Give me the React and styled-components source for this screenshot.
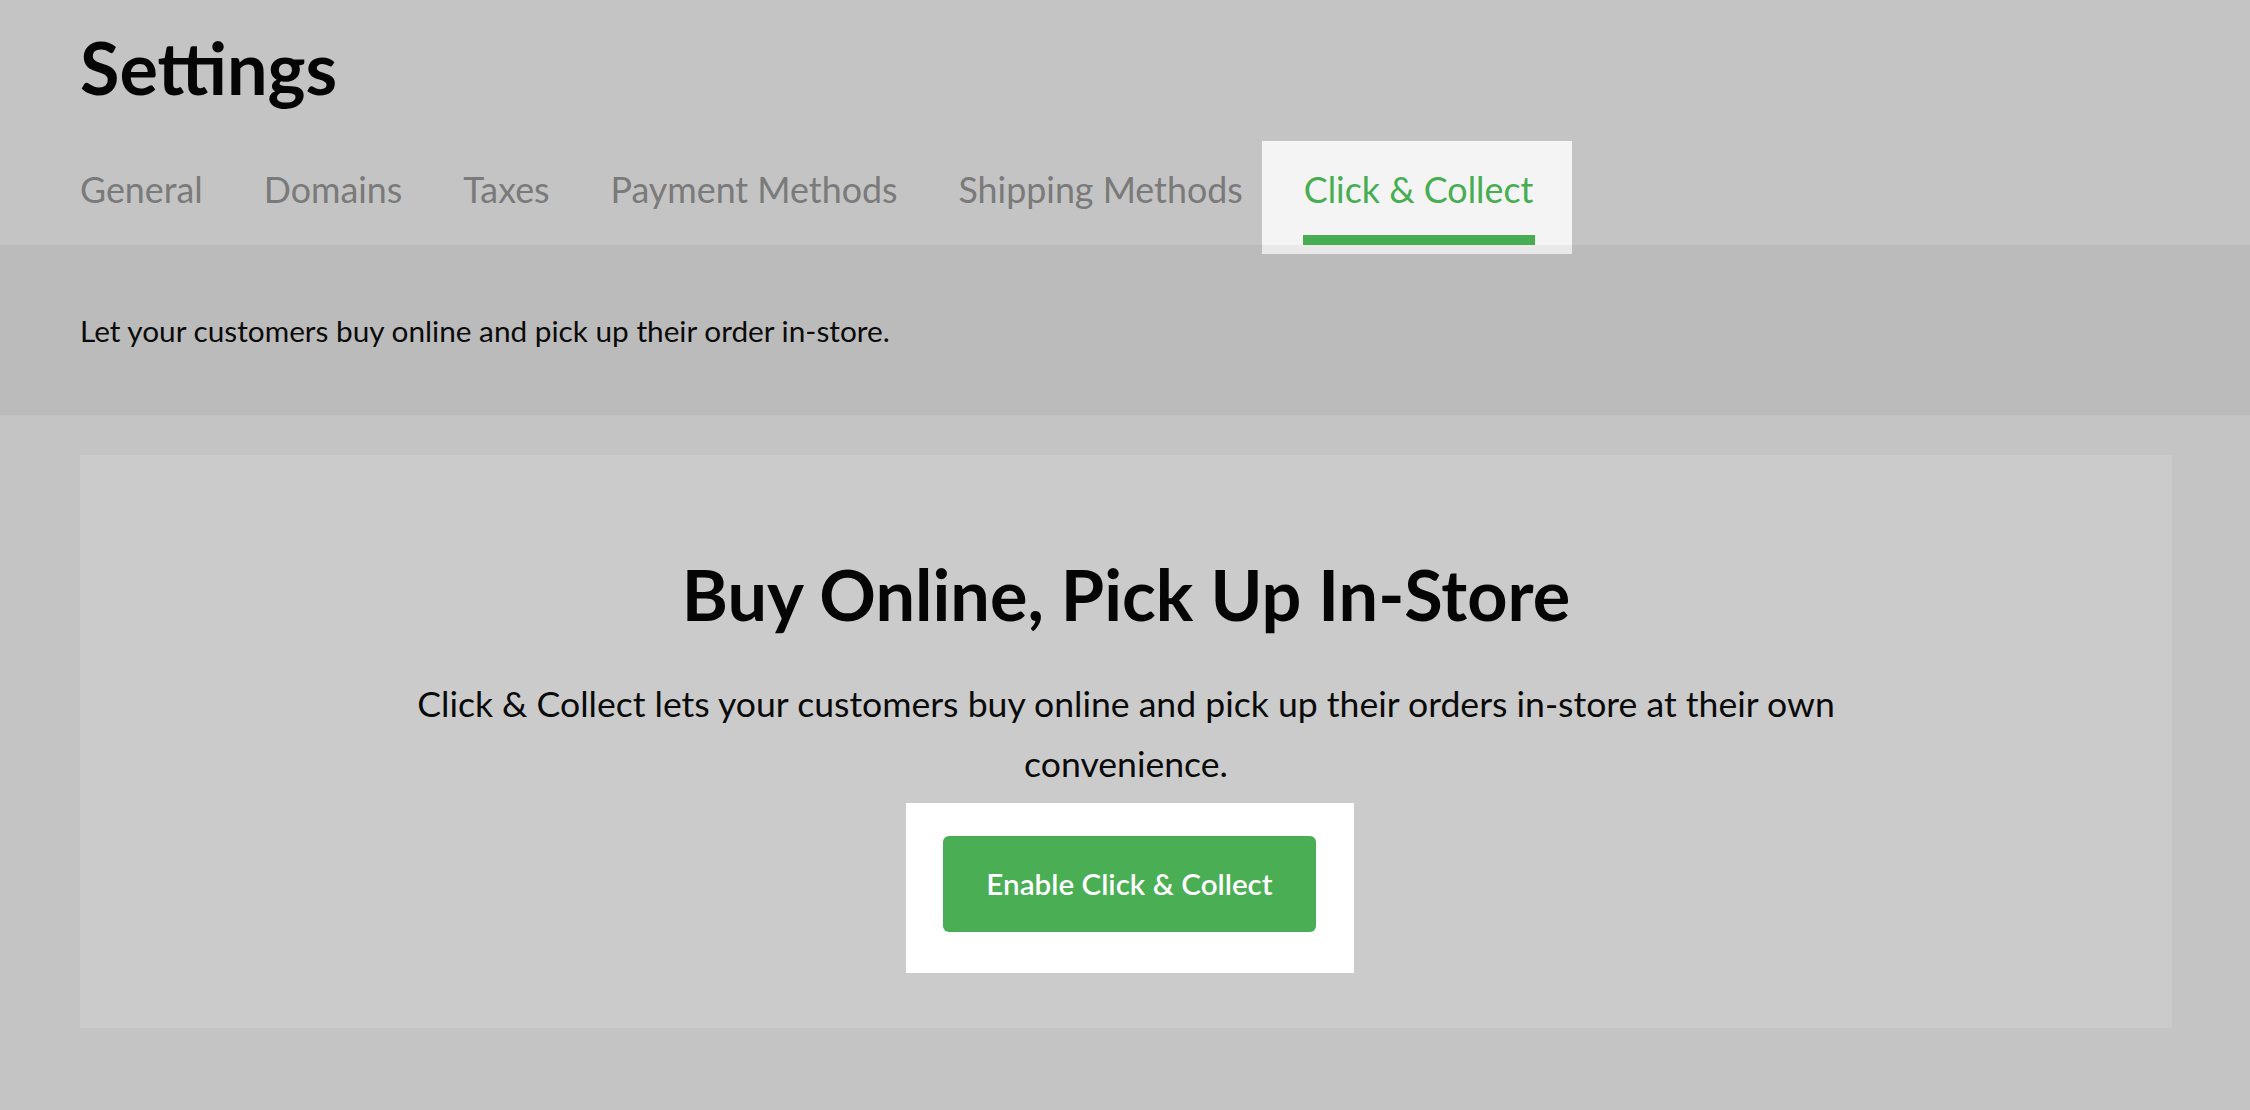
import styled, { createGlobalStyle } from 'styled-components'

const GlobalStyle = createGlobalStyle`
  html, body {
    margin: 0;
    padding: 0;
    background: #c4c4c4;
    font-family: Lato, "Open Sans", sans-serif;
  }
`;

const Page = styled.div`
  min-height: 1110px;
  background: #c4c4c4;
  color: #050505;
`;

const Header = styled.header`
  padding: 24px 80px 0;
  background: #c4c4c4;
`;

const Title = styled.h1`
  margin: 0;
  font-size: 72px;
  line-height: 1.2;
  font-weight: 700;
  color: #050505;
`;

const TabBar = styled.nav`
  display: flex;
  gap: 61px;
  margin-top: 58px;
`;

const Tab = styled.a`
  font-size: 35.8px;
  line-height: 43px;
  padding-bottom: 34px;
  color: ${p => (p.$active ? '#46ad51' : '#7a7a7a')};
  position: ${p => (p.$active ? 'relative' : 'static')};
  z-index: ${p => (p.$active ? 0 : 'auto')};
  cursor: pointer;

  ${p => p.$active && `
    &::before {
      content: '';
      position: absolute;
      top: -27px;
      left: -42px;
      right: -39px;
      bottom: -9px;
      z-index: -1;
      background: linear-gradient(#f4f4f4 0 calc(100% - 9px), #e9e9e9 0);
    }
    &::after {
      content: '';
      position: absolute;
      left: -1px;
      right: -2px;
      bottom: 0;
      height: 10px;
      background: #46ad51;
    }
  `}
`;

const Intro = styled.div`
  height: 170px;
  display: flex;
  align-items: center;
  padding: 0 80px;
  background: #bbbbbb;
  font-size: 29.75px;
  color: #0a0a0a;
`;

const Main = styled.main`
  padding: 40px 78px 0 80px;
`;

const Card = styled.section`
  background: #cbcbcb;
  padding: 96px 40px;
  display: flex;
  flex-direction: column;
  align-items: center;
  text-align: center;
`;

const CardTitle = styled.h2`
  margin: 0;
  font-size: 70.2px;
  line-height: 86px;
  font-weight: 700;
  color: #050505;
`;

const CardText = styled.p`
  margin: 37px 0 0;
  max-width: 1480px;
  font-size: 35.6px;
  line-height: 60px;
  color: #0a0a0a;
`;

const ButtonSpot = styled.div`
  position: relative;
  z-index: 0;
  margin: 42px 0 0 7px;

  &::before {
    content: '';
    position: absolute;
    top: -33px;
    left: -37px;
    right: -38px;
    bottom: -41px;
    z-index: -1;
    background: #ffffff;
  }
`;

const Button = styled.button`
  display: block;
  border: none;
  border-radius: 6px;
  background: #49ae54;
  color: #ffffff;
  font-family: Lato, "Open Sans", sans-serif;
  font-size: 29.6px;
  font-weight: 600;
  line-height: 36px;
  padding: 30px 43px;
  cursor: pointer;
`;

const tabs = ['General', 'Domains', 'Taxes', 'Payment Methods', 'Shipping Methods', 'Click & Collect'];

export default function App() {
  return (
    <Page>
      <GlobalStyle />
      <Header>
        <Title>Settings</Title>
        <TabBar>
          {tabs.map(t => (
            <Tab key={t} $active={t === 'Click & Collect'}>{t}</Tab>
          ))}
        </TabBar>
      </Header>
      <Intro>Let your customers buy online and pick up their order in-store.</Intro>
      <Main>
        <Card>
          <CardTitle>Buy Online, Pick Up In-Store</CardTitle>
          <CardText>
            Click &amp; Collect lets your customers buy online and pick up their orders in-store at their own convenience.
          </CardText>
          <ButtonSpot>
            <Button>Enable Click &amp; Collect</Button>
          </ButtonSpot>
        </Card>
      </Main>
    </Page>
  );
}
